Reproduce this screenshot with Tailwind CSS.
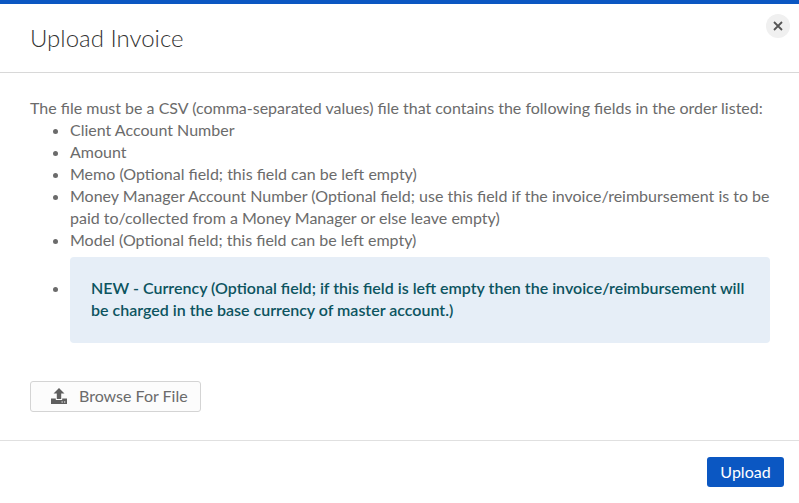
<!DOCTYPE html>
<html lang="en">
<head>
  <meta charset="UTF-8">
  <meta name="viewport" content="width=device-width, initial-scale=1">
  <title>Upload Invoice</title>
  <script src="https://cdn.jsdelivr.net/npm/@tailwindcss/browser@4"></script>
</head>
<body class="bg-white font-['Lato',sans-serif] text-[16px] leading-[22px] text-[#6b6b6b]">
  <form class="relative border-t-4 border-[#0b57c2]">
    <header class="flex h-[69px] items-center border-b border-[#d8d8d8] px-[30px]">
      <h1 class="text-[24px] font-light leading-8 text-[#333]">Upload Invoice</h1>
      <button type="button" aria-label="Close" class="absolute right-[9px] top-[10px] flex size-6 items-center justify-center rounded-full bg-[#f0f0f0] text-[#555]">
        <svg class="size-[10px]" viewBox="0 0 10 10" fill="none" stroke="currentColor" stroke-width="1.800"><path d="M1 1l8 8M9 1L1 9"/></svg>
      </button>
    </header>

    <main class="pb-7 pl-[30px] pr-[29px] pt-6">
      <p>The file must be a CSV (comma-separated values) file that contains the following fields in the order listed:</p>
      <ul class="list-disc pl-10">
        <li>Client Account Number</li>
        <li>Amount</li>
        <li>Memo (Optional field; this field can be left empty)</li>
        <li>Money Manager Account Number (Optional field; use this field if the invoice/reimbursement is to be paid to/collected from a Money Manager or else leave empty)</li>
        <li>Model (Optional field; this field can be left empty)</li>
        <li>
          <div class="mt-[6px] rounded bg-[#e6eef7] px-[21px] pb-[22px] pt-5 font-semibold text-[#0c5460]">NEW - Currency (Optional field; if this field is left empty then the invoice/reimbursement will be charged in the base currency of master account.)</div>
        </li>
      </ul>
      <button type="button" class="mt-[38px] flex h-[31px] items-center gap-3 rounded-[3px] border border-[#d4d4d4] bg-[#fcfcfc] pb-px pl-5 pr-3">
        <svg class="size-4" viewBox="0 0 16 16" fill="#5f5f5f"><path d="M8 0l5.500 5.500H10.200V11H5.800V5.500H2.500zM0 10.500h4.800V12h6.400v-1.500H16V16H0z"/><path fill="#fcfcfc" d="M10.500 13.500h1.300v1h-1.300zM13 13.500h1.300v1H13z"/></svg>
        Browse For File
      </button>
    </main>

    <footer class="flex justify-end border-t border-[#e0e0e0] px-[15px] py-4">
      <button type="submit" class="h-[30px] min-w-[77px] rounded-[3px] bg-[#0b57c2] px-3 pb-px text-white">Upload</button>
    </footer>
  </form>
</body>
</html>
